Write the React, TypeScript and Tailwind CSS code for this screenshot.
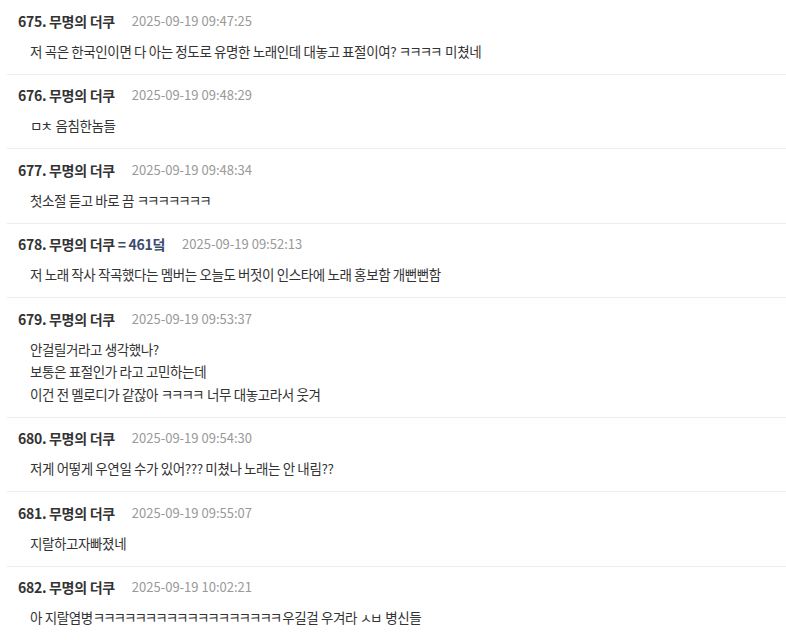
import React from "react";

interface Comment {
  no: number;
  name: string;
  extra?: string;
  time: string;
  lines: string[];
}

const k = (n: number) => "ㅋ".repeat(n);

const comments: Comment[] = [
  {
    no: 675,
    name: "무명의 더쿠",
    time: "2025-09-19 09:47:25",
    lines: [`저 곡은 한국인이면 다 아는 정도로 유명한 노래인데 대놓고 표절이여? ${k(4)} 미쳤네`],
  },
  { no: 676, name: "무명의 더쿠", time: "2025-09-19 09:48:29", lines: ["ㅁㅊ 음침한놈들"] },
  { no: 677, name: "무명의 더쿠", time: "2025-09-19 09:48:34", lines: [`첫소절 듣고 바로 끔 ${k(7)}`] },
  {
    no: 678,
    name: "무명의 더쿠",
    extra: "= 461덬",
    time: "2025-09-19 09:52:13",
    lines: ["저 노래 작사 작곡했다는 멤버는 오늘도 버젓이 인스타에 노래 홍보함 개뻔뻔함"],
  },
  {
    no: 679,
    name: "무명의 더쿠",
    time: "2025-09-19 09:53:37",
    lines: [
      "안걸릴거라고 생각했나?",
      "보통은 표절인가 라고 고민하는데",
      `이건 전 멜로디가 같잖아 ${k(4)} 너무 대놓고라서 웃겨`,
    ],
  },
  {
    no: 680,
    name: "무명의 더쿠",
    time: "2025-09-19 09:54:30",
    lines: ["저게 어떻게 우연일 수가 있어??? 미쳤나 노래는 안 내림??"],
  },
  { no: 681, name: "무명의 더쿠", time: "2025-09-19 09:55:07", lines: ["지랄하고자빠졌네"] },
  {
    no: 682,
    name: "무명의 더쿠",
    time: "2025-09-19 10:02:21",
    lines: [`아 지랄염병${k(18)}우길걸 우겨라 ㅅㅂ 병신들`],
  },
];

// standalone jamo (ㅋㅋ, ㅁㅊ ...) are much narrower in the original font
function Line({ text }: { text: string }) {
  const parts = text.split(/([\u3131-\u318E]+)/);
  return (
    <p>
      {parts.map((p, i) =>
        /[\u3131-\u318E]/.test(p) ? (
          <span key={i} className="tracking-[-2px] pr-[2px]">
            {p}
          </span>
        ) : (
          <React.Fragment key={i}>{p}</React.Fragment>
        )
      )}
    </p>
  );
}

function CommentRow({ c }: { c: Comment }) {
  return (
    <li className="border-b border-[#ececec] pl-[11px] pt-[10.5px] pb-[11.5px]">
      <div className="flex items-center h-[20px] leading-[20px]">
        <span className="text-[14px] font-bold text-[#333] tracking-[-0.3px]">
          {c.no}. {c.name}
          {c.extra && <span className="text-[#3d4d6e]"> {c.extra}</span>}
        </span>
        <span className="ml-[17px] text-[13px] text-[#999]">{c.time}</span>
      </div>
      <div className="mt-[9px] pl-[12px] text-[13.5px] leading-[22.5px] text-[#333] tracking-[-0.4px]">
        {c.lines.map((line, i) => (
          <Line key={i} text={line} />
        ))}
      </div>
    </li>
  );
}

export default function App() {
  return (
    <div
      className="w-[786px] h-[640px] overflow-hidden bg-white pl-[7px]"
      style={{ fontFamily: '"Noto Sans CJK KR", "Noto Sans", sans-serif' }}
    >
      <ul>
        {comments.map((c) => (
          <CommentRow key={c.no} c={c} />
        ))}
      </ul>
    </div>
  );
}
